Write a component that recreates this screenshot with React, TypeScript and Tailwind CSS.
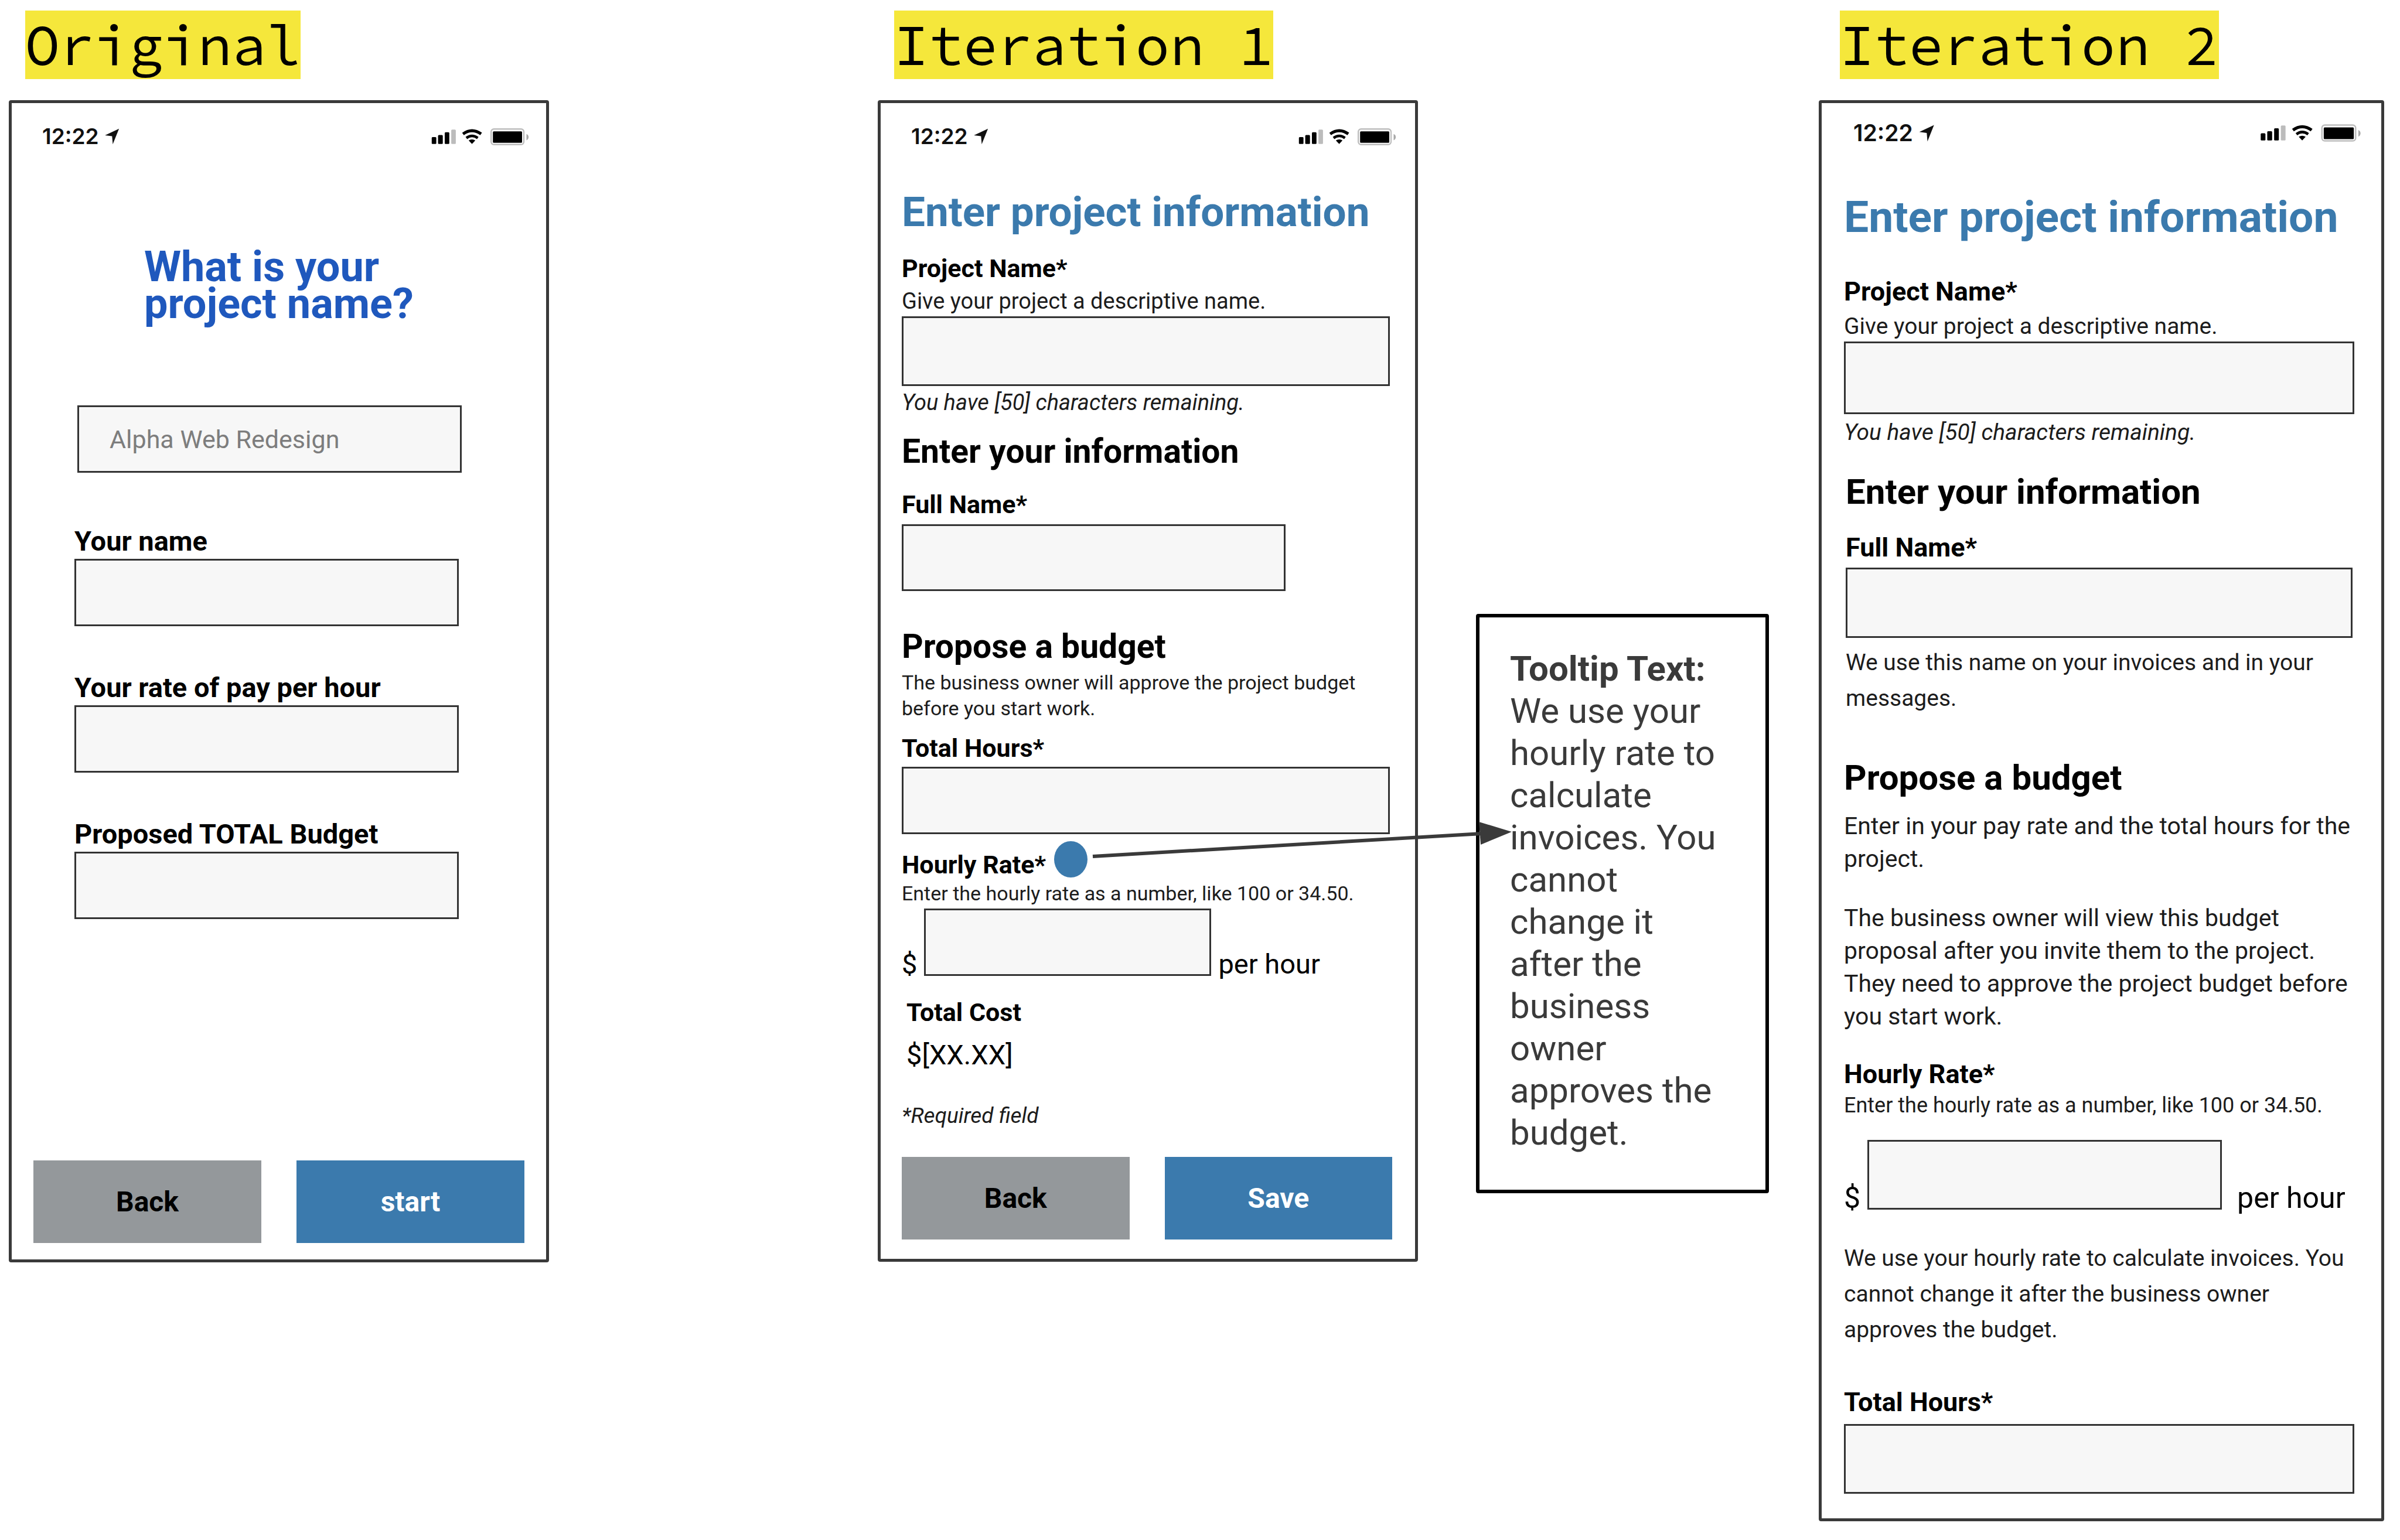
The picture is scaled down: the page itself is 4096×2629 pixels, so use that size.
import React, { ReactNode } from "react";
import { clsx } from "clsx";

function LocationArrow({ large }: { large?: boolean }) {
  return (
    <svg viewBox="412 68 88 100" className={large ? "h-[31px] w-7" : "h-[30px] w-[26px]"} aria-hidden="true">
      <path d="M497 73 L461 163 L457 116 L416 111 Z" fill="#111" />
    </svg>
  );
}

function PhoneIndicators({ large }: { large?: boolean }) {
  return (
    <svg viewBox="50 60 560 110" className={large ? "h-[34px] w-44" : "h-[33px] w-[168px]"} aria-hidden="true">
      <rect x="56" y="117" width="26" height="39" rx="5" fill="#000" />
      <rect x="92" y="105" width="27" height="51" rx="5" fill="#000" />
      <rect x="130" y="89" width="26" height="67" rx="5" fill="#000" />
      <rect x="167" y="74" width="26" height="82" rx="5" fill="#bcbcbc" />
      <path d="M234 99 Q285 62 337 99" fill="none" stroke="#000" strokeWidth="17" />
      <path d="M253 122 Q285 98 318 122" fill="none" stroke="#000" strokeWidth="15" />
      <path d="M266 136 Q285 124 304 136 L285 156 Z" fill="#000" />
      <rect x="394" y="71" width="186" height="88" rx="16" fill="none" stroke="#bdbdbd" strokeWidth="8" />
      <rect x="404" y="84" width="166" height="65" rx="5" fill="#000" />
      <path d="M595 99 Q607 104 607 117 Q607 130 595 135 Z" fill="#a8a8a8" />
    </svg>
  );
}

function StatusBar({ large, className }: { large?: boolean; className: string }) {
  return (
    <div
      className={clsx(
        "flex items-center justify-between font-[Inter] font-semibold text-[#111]",
        large ? "h-[38px] text-[39px]" : "h-9 text-[37px]",
        className,
      )}
    >
      <div className="flex items-center gap-[9px]">
        <span className="leading-9">12:22</span>
        <LocationArrow large={large} />
      </div>
      <PhoneIndicators large={large} />
    </div>
  );
}

function Column({ title, indent, className, children }: { title: string; indent: string; className: string; children: ReactNode }) {
  return (
    <section className={clsx("pt-[18px]", className)}>
      <h2 className={clsx("mb-9 flex", indent)}>
        <span className="bg-[#f5e73b] font-['Source_Code_Pro','Liberation_Mono',monospace] text-[98px] leading-[117px] font-normal whitespace-nowrap">
          {title}
        </span>
      </h2>
      <div className="rounded-[4px] border-[5px] border-[#3a3a3a] bg-white">{children}</div>
    </section>
  );
}

function Box({ id, className, placeholder }: { id: string; className: string; placeholder?: string }) {
  return (
    <input
      id={id}
      type="text"
      placeholder={placeholder}
      className={clsx("block rounded-none border-[3px] border-[#333] bg-[#f7f7f7] placeholder:text-[#7d7d7d] placeholder:opacity-100", className)}
    />
  );
}

function Actions({ submit, className }: { submit: string; className: string }) {
  return (
    <div className={clsx("grid grid-cols-2 gap-[60px] text-[48px] font-bold", className)}>
      <button type="button" className="h-[141px] bg-[#94989b] text-black">Back</button>
      <button type="submit" className="h-[141px] bg-[#3b7aad] text-white">{submit}</button>
    </div>
  );
}

function Original() {
  return (
    <form className="pt-[39px] pb-7">
      <StatusBar className="pr-[29px] pl-[52px]" />
      <h1 className="mt-[173px] px-[226px] text-[72px] leading-[63px] font-bold whitespace-nowrap text-[#1f58bd]">
        <label htmlFor="o-project" className="block">
          What is your
          <br />
          project name?
        </label>
      </h1>
      <div className="mt-[142px] pr-36 pl-28">
        <Box id="o-project" placeholder="Alpha Web Redesign" className="h-[115px] w-full px-[52px] text-[43px]" />
      </div>
      <div className="mt-[89px] flex flex-col gap-[77px] pr-[149px] pl-[107px]">
        {[
          ["o-name", "Your name"],
          ["o-rate", "Your rate of pay per hour"],
          ["o-budget", "Proposed TOTAL Budget"],
        ].map(([id, text]) => (
          <div key={id}>
            <label htmlFor={id} className="mb-0.5 block text-[47px] leading-14 font-bold">{text}</label>
            <Box id={id} className="h-[115px] w-full px-6 text-[43px]" />
          </div>
        ))}
      </div>
      <Actions submit="start" className="mt-[412px] px-[37px]" />
    </form>
  );
}

function IterationOne() {
  const label = "block text-[43px] leading-[52px] font-bold";
  const heading = "text-[57px] leading-[68px] font-bold";
  return (
    <form className="pt-[39px] pb-[33px]">
      <StatusBar className="pr-[32px] pl-[52px]" />
      <div className="mt-[69px] pr-[39px] pl-9">
        <h1 className="text-[71px] leading-[84px] font-bold whitespace-nowrap text-[#3b7aad]">Enter project information</h1>
        <label htmlFor="a-project" className={clsx(label, "mt-7")}>Project Name*</label>
        <p className="mt-2 text-[38px] leading-11 text-[#1c1c1c]">Give your project a descriptive name.</p>
        <div className="mt-1 pr-1">
          <Box id="a-project" className="h-[119px] w-full px-6 text-[43px]" />
        </div>
        <p className="mt-1.5 text-[38px] leading-11 text-[#1c1c1c] italic">You have [50] characters remaining.</p>

        <h2 className={clsx(heading, "mt-7")}>Enter your information</h2>
        <label htmlFor="a-name" className={clsx(label, "mt-[30px]")}>Full Name*</label>
        <Box id="a-name" className="mt-2 h-[114px] w-[655px] px-6 text-[43px]" />

        <h2 className={clsx(heading, "mt-[61px]")}>Propose a budget</h2>
        <p className="mt-[5px] text-[34px] leading-11 text-[#1c1c1c]">
          The business owner will approve the project budget before you start work.
        </p>
        <label htmlFor="a-hours" className={clsx(label, "mt-5")}>Total Hours*</label>
        <div className="mt-1.5 pr-1">
          <Box id="a-hours" className="h-[115px] w-full px-6 text-[43px]" />
        </div>
        <div className="mt-3 flex items-end gap-[14px]">
          <label htmlFor="a-rate" className={label}>Hourly Rate*</label>
          <button type="button" aria-label="About the hourly rate" className="mb-1 h-[62px] w-[57px] rounded-[50%] bg-[#3b7aad]" />
        </div>
        <p className="mt-px text-[34px] leading-11 text-[#1c1c1c]">Enter the hourly rate as a number, like 100 or 34.50.</p>
        <div className="mt-1 flex items-end gap-3 text-[47px] leading-10">
          <span>$</span>
          <Box id="a-rate" className="h-[115px] w-[490px] px-6 text-[43px]" />
          <span>per hour</span>
        </div>
        <div className="mt-9 pl-2">
          <h3 className={label}>Total Cost</h3>
          <p className="mt-[19px] text-[47px] leading-14">$[XX.XX]</p>
        </div>
        <p className="mt-[54px] text-[37px] leading-11 text-[#1c1c1c] italic">*Required field</p>
        <Actions submit="Save" className="mt-12" />
      </div>
    </form>
  );
}

function IterationTwo() {
  const label = "block text-[45px] leading-[54px] font-bold";
  const heading = "text-[60px] leading-[72px] font-bold";
  const help = "text-[39px] leading-[46px] text-[#1c1c1c]";
  const note = "text-[39px] leading-[61px] text-[#1c1c1c]";
  return (
    <form className="pt-8 pb-[42px]">
      <StatusBar large className="pr-[33px] pl-[54px]" />
      <div className="mt-20 pr-[46px] pl-[38px]">
        <h1 className="text-[75px] leading-[88px] font-bold whitespace-nowrap text-[#3b7aad]">Enter project information</h1>
        <label htmlFor="b-project" className={clsx(label, "mt-[57px]")}>Project Name*</label>
        <p className={clsx(help, "mt-[9px]")}>Give your project a descriptive name.</p>
        <Box id="b-project" className="mt-[3px] h-[124px] w-full px-6 text-[43px]" />
        <p className={clsx(help, "mt-2 italic")}>You have [50] characters remaining.</p>

        <div className="mt-[43px] px-[3px]">
          <h2 className={heading}>Enter your information</h2>
          <label htmlFor="b-name" className={clsx(label, "mt-8")}>Full Name*</label>
          <Box id="b-name" className="mt-[7px] h-30 w-full px-6 text-[43px]" />
          <p className={clsx(note, "mt-3")}>We use this name on your invoices and in your messages.</p>
        </div>

        <h2 className={clsx(heading, "mt-[69px]")}>Propose a budget</h2>
        <div className="mt-[18px] flex flex-col gap-[45px] text-[41px] leading-14 text-[#1c1c1c]">
          <p>Enter in your pay rate and the total hours for the project.</p>
          <p>
            The business owner will view this budget proposal after you invite them to the project. They need to approve
            the project budget before you start work.
          </p>
        </div>
        <label htmlFor="b-rate" className={clsx(label, "mt-11")}>Hourly Rate*</label>
        <p className="mt-[3px] text-[36px] leading-[46px] text-[#1c1c1c]">Enter the hourly rate as a number, like 100 or 34.50.</p>
        <div className="mt-9 flex items-end text-[50px] leading-10">
          <span className="mr-3">$</span>
          <Box id="b-rate" className="h-[119px] w-[605px] px-6 text-[43px]" />
          <span className="ml-[26px]">per hour</span>
        </div>
        <p className={clsx(note, "mt-[53px]")}>
          We use your hourly rate to calculate invoices. You cannot change it after the business owner approves the
          budget.
        </p>
        <label htmlFor="b-hours" className={clsx(label, "mt-[66px]")}>Total Hours*</label>
        <Box id="b-hours" className="mt-[10px] h-[119px] w-full px-6 text-[43px]" />
      </div>
    </form>
  );
}

function Tooltip() {
  return (
    <aside className="relative col-start-5 mt-[1048px] rounded-[4px] border-[6px] border-black bg-white pt-[52px] pr-14 pb-[61px] pl-[52px] text-[60px] leading-[72px] text-[#3a3a3a]">
      <p className="font-bold">Tooltip Text:</p>
      <p>We use your hourly rate to calculate invoices. You cannot change it after the business owner approves the budget.</p>
      <svg
        viewBox="1860 1396 725 80"
        className="pointer-events-none absolute top-[343px] left-[-665px] h-20 w-[725px] max-w-none"
        aria-hidden="true"
      >
        <path d="M1865 1461 L2530 1422" stroke="#3a3a3a" strokeWidth="6" fill="none" />
        <path d="M2524 1402 L2580 1419 L2527 1441 Z" fill="#3a3a3a" />
      </svg>
    </aside>
  );
}

export default function App() {
  return (
    <main className="grid min-h-screen grid-cols-[922fr_561fr_922fr_99fr_500fr_85fr_965fr] items-start bg-white pr-[27px] pl-[15px] font-['Roboto',sans-serif] text-black">
      <Column title="Original" indent="pl-7" className="col-start-1">
        <Original />
      </Column>
      <Column title="Iteration 1" indent="pl-7" className="col-start-3">
        <IterationOne />
      </Column>
      <Tooltip />
      <Column title="Iteration 2" indent="pl-9" className="col-start-7">
        <IterationTwo />
      </Column>
    </main>
  );
}
